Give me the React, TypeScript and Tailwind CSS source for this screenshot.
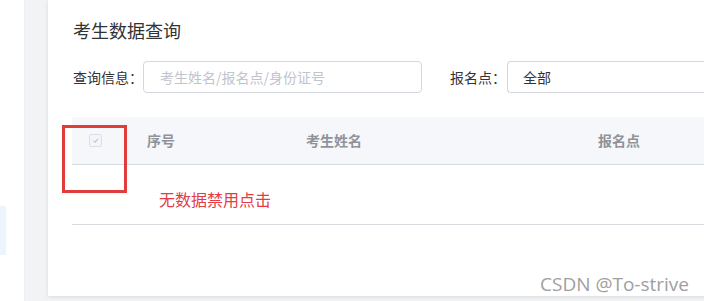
import React from 'react'

const font = { fontFamily: '"Noto Sans CJK SC", "Noto Sans", sans-serif' }

function Checkbox() {
  return (
    <span className="inline-block w-[13px] h-[13px] rounded-[2px] border border-[#dcdfe6] bg-[#f2f6fc] relative">
      <svg viewBox="0 0 13 13" className="w-full h-full">
        <path d="M4 6.5 L6 8.5 L9.5 4.5" stroke="#c0c4cc" strokeWidth="1.2" fill="none" />
      </svg>
    </span>
  )
}

export default function App() {
  return (
    <div
      className="w-[704px] h-[301px] flex bg-[#f2f3f5] overflow-hidden relative"
      style={font}
    >
      {/* 侧边栏 */}
      <div className="w-[25px] shrink-0 bg-white border-r border-[#eceef1] flex flex-col">
        <div className="mt-[206px] h-[49px] w-[6px] bg-[#eef4fc]" />
      </div>

      {/* 主卡片 */}
      <div className="ml-[23px] w-[700px] shrink-0 h-[296px] bg-white shadow-[0_1px_4px_rgba(0,0,0,0.10)] pl-[25px] pt-[18px] relative">
        <h2 className="text-[18px] leading-[24px] text-[#333]">考生数据查询</h2>

        {/* 查询条件 */}
        <div className="mt-[19px] flex items-center text-[14px] text-[#333]">
          <span className="w-[70px]">查询信息：</span>
          <div className="w-[279px] h-[32px] border border-[#d4d7de] rounded-[4px] flex items-center pl-[16px] text-[#c0c4cc]">
            考生姓名/报名点/身份证号
          </div>
          <span className="ml-[28px] w-[57px]">报名点：</span>
          <div className="flex-1 h-[32px] border border-[#d4d7de] rounded-l-[4px] border-r-0 flex items-center pl-[15px] text-[#333]">
            全部
          </div>
        </div>

        {/* 表格 */}
        <div className="mt-[24px] -ml-[1px]">
          <div className="h-[48px] bg-[#f5f7fa] border-b border-[#d8dbe0] flex items-center text-[14px] font-bold text-[#909399]">
            <div className="w-[75px] pl-[17px] flex items-center">
              <Checkbox />
            </div>
            <div className="w-[159px]">序号</div>
            <div className="w-[292px]">考生姓名</div>
            <div>报名点</div>
          </div>
          <div className="h-[60px] border-b border-[#d8dbe0] pl-[87px] pt-[23px] text-[16px] leading-[22px] text-[#e33c46]">
            无数据禁用点击
          </div>
        </div>

        {/* 标注框 */}
        <div className="absolute left-[14px] top-[125px] w-[65px] h-[68px] border-[3px] border-[#e23b3b]" />
      </div>

      {/* 水印 */}
      <div
        className="absolute left-[540px] top-[272px] text-[19px] leading-[24px] text-[#a0a0a0]"
        style={{ fontFamily: '"Open Sans", "Noto Sans", sans-serif' }}
      >
        CSDN @To-strive
      </div>
    </div>
  )
}
